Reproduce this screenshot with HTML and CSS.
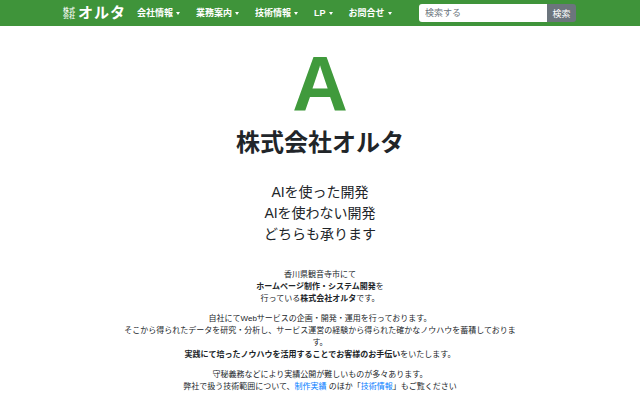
FILE: index.html
```html
<!DOCTYPE html>
<html lang="ja">
<head>
  <meta charset="UTF-8" />
  <title>株式会社オルタ</title>
  <link rel="stylesheet" href="styles.css">
</head>
<body>
  <header class="navbar">
    <a class="brand" href="#">
      <span class="brand-small">株式<br>会社</span>
      <span class="brand-name">オルタ</span>
    </a>
    <nav class="nav-menu">
      <a class="nav-link" href="#">会社情報<span class="caret"></span></a>
      <a class="nav-link" href="#">業務案内<span class="caret"></span></a>
      <a class="nav-link" href="#">技術情報<span class="caret"></span></a>
      <a class="nav-link" href="#">LP<span class="caret"></span></a>
      <a class="nav-link" href="#">お問合せ<span class="caret"></span></a>
    </nav>
    <form class="search">
      <input class="search-input" type="text" placeholder="検索する">
      <button class="search-btn" type="button">検索</button>
    </form>
  </header>

  <main class="container">
    <div class="logo-a">A</div>
    <h1 class="company">株式会社オルタ</h1>
    <p class="lead">AIを使った開発<br>AIを使わない開発<br>どちらも承ります</p>
    <p class="text">香川県観音寺市にて<br><b>ホームページ制作・システム開発</b>を<br>行っている<b>株式会社オルタ</b>です。</p>
    <p class="text">自社にてWebサービスの企画・開発・運用を行っております。<br>そこから得られたデータを研究・分析し、サービス運営の経験から得られた確かなノウハウを蓄積しております。<br><b>実践にて培ったノウハウを活用することでお客様のお手伝い</b>をいたします。</p>
    <p class="text">守秘義務などにより実績公開が難しいものが多々あります。<br>弊社で扱う技術範囲について、<a href="#">制作実績</a> のほか「<a href="#">技術情報</a>」もご覧ください</p>
  </main>
</body>
</html>
```

FILE: styles.css
```css
* {
  box-sizing: border-box;
}
html, body {
  height: 400px;
  overflow: hidden;
}
body {
  margin: 0;
  font-family: "Liberation Sans", "Noto Sans CJK JP", sans-serif;
  font-size: 9px;
  line-height: 1.5;
  color: #212529;
  background: #fff;
}
a {
  color: #007bff;
  text-decoration: none;
}
.navbar {
  display: flex;
  align-items: center;
  height: 26px;
  padding: 0 64px 0 63px;
  background: #3f943a;
}
.brand {
  display: flex;
  align-items: center;
  gap: 3px;
  color: #fff;
  margin-right: 11px;
}
.brand-small {
  font-size: 6px;
  line-height: 6px;
  font-weight: 500;
}
.brand-name {
  font-size: 15px;
  font-weight: 700;
  letter-spacing: 1px;
  line-height: 20px;
}
.nav-menu {
  display: flex;
  gap: 16px;
  flex: 1;
  padding-top: 1px;
}
.nav-link {
  display: flex;
  align-items: center;
  color: #fff;
  font-size: 9px;
  font-weight: 700;
}
.caret {
  width: 0;
  height: 0;
  margin: 0 0 1px 3px;
  border-top: 3px solid #fff;
  border-left: 2.5px solid transparent;
  border-right: 2.5px solid transparent;
}
.search {
  display: flex;
  height: 18px;
}
.search-input {
  width: 128px;
  padding: 0 6px;
  border: 0;
  border-radius: 3px 0 0 3px;
  font-family: inherit;
  font-size: 9px;
  background: #fff;
}
.search-input::placeholder {
  color: #6c757d;
}
.search-btn {
  width: 29px;
  padding: 0;
  border: 0;
  border-radius: 0 3px 3px 0;
  font-family: inherit;
  font-size: 9px;
  color: #fff;
  background: #6c757d;
}
.container {
  width: 400px;
  margin: 0 auto;
  text-align: center;
}
.logo-a {
  margin-top: 19px;
  font-size: 77px;
  font-weight: 700;
  line-height: 78px;
  color: #409a3c;
}
.company {
  margin: 4px 0 0;
  font-size: 24px;
  font-weight: 700;
  line-height: 32px;
}
.lead {
  margin: 23px 0 24px;
  font-size: 14px;
  line-height: 21px;
}
.text {
  margin: 0 0 8px;
  font-size: 8px;
  line-height: 12px;
}
```
